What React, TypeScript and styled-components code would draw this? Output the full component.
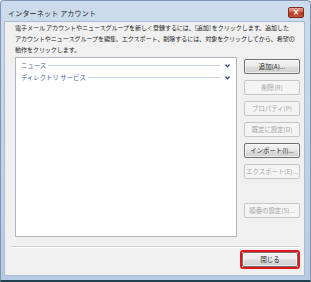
import React from "react";
import styled, { createGlobalStyle } from "styled-components";

const Global = createGlobalStyle`
  html, body { margin: 0; padding: 0; background: #ffffff; }
  body { font-family: "Noto Sans CJK JP", "Noto Sans", sans-serif; }
  * { box-sizing: border-box; }
`;

const Window = styled.div`
  width: 311px;
  height: 282px;
  display: flex;
  flex-direction: column;
  background: linear-gradient(180deg, #cddcec 0%, #c3d5e8 40%, #b6cbe2 100%);
  border: 1px solid #7d95b0;
  border-bottom: 2px solid #24414f;
  border-radius: 4px 4px 0 0;
  overflow: hidden;
`;

const TitleBar = styled.div`
  height: 20px;
  flex: none;
  display: flex;
  align-items: center;
  justify-content: space-between;
  padding: 0 6px 0 7px;
`;

const Title = styled.span`
  font-size: 7px;
  color: #1b1b1b;
  letter-spacing: 0.2px;
  padding-top: 3px;
`;

const CloseButton = styled.div`
  width: 16px;
  height: 11px;
  margin-top: 3px;
  border-radius: 2px;
  border: 1px solid #7a2a22;
  background: linear-gradient(180deg, #e8a99a 0%, #d1604c 45%, #b7321f 55%, #c8563c 100%);
  display: flex;
  align-items: center;
  justify-content: center;
  color: #fff;
  font-family: "DejaVu Sans", sans-serif;
  font-size: 8px;
  font-weight: bold;
  line-height: 1;
`;

const Client = styled.div`
  flex: 1;
  margin: 0 5px 4px 3px;
  background: #f0f0f0;
  border: 1px solid #a8bcd3;
  display: flex;
  flex-direction: column;
  padding: 0 4px 0 6px;
`;

const Description = styled.p`
  margin: 0;
  padding: 0 0 0 4px;
  font-size: 6.1px;
  line-height: 11px;
  color: #222;
  letter-spacing: -0.12px;
  white-space: nowrap;
`;

const MainRow = styled.div`
  display: flex;
  gap: 7px;
  margin-top: 2px;
  padding-left: 4px;
`;

const ListBox = styled.div`
  width: 222px;
  height: 180px;
  background: #fff;
  border: 1px solid #aeb5bd;
  padding: 2px 6px 0 5px;
  display: flex;
  flex-direction: column;
  gap: 1px;
`;

const GroupRow = styled.div`
  height: 11px;
  display: flex;
  align-items: center;
  gap: 2px;
`;

const GroupLabel = styled.span`
  font-size: 6.4px;
  color: #4a64a8;
  white-space: nowrap;
`;

const GroupLine = styled.div`
  flex: 1;
  height: 1px;
  background: #c6d3e9;
  margin-right: 3px;
`;

const Chevron = styled.svg`
  width: 5px;
  height: 4px;
  flex: none;
`;

const ButtonColumn = styled.div`
  display: flex;
  flex-direction: column;
  gap: 6px;
  padding-top: 2px;
`;

const Button = styled.div<{ $disabled?: boolean; $spaced?: boolean }>`
  width: 56px;
  height: 15px;
  border-radius: 2px;
  display: flex;
  align-items: center;
  justify-content: center;
  font-size: 6.4px;
  white-space: nowrap;
  margin-top: ${(p) => (p.$spaced ? "18px" : "0")};
  color: ${(p) => (p.$disabled ? "#a4a4a4" : "#1e1e1e")};
  border: 1px solid ${(p) => (p.$disabled ? "#c2c6ca" : "#707070")};
  background: ${(p) =>
    p.$disabled
      ? "#f4f4f4"
      : "linear-gradient(180deg, #f2f2f2 0%, #ebebeb 48%, #dddddd 52%, #cfcfcf 100%)"};
  box-shadow: ${(p) => (p.$disabled ? "none" : "inset 0 0 0 1px rgba(255,255,255,0.6)")};
`;

const Separator = styled.div`
  height: 2px;
  margin-top: 9px;
  border-top: 1px solid #d0d0d0;
  border-bottom: 1px solid #ffffff;
`;

const Footer = styled.div`
  display: flex;
  justify-content: flex-end;
  padding: 2px 0 0 0;
`;

const Highlight = styled.div`
  border: 2px solid #e2161a;
  border-radius: 3px;
  padding: 0;
`;

const items = ["ニュース", "ディレクトリ サービス"];

const sideButtons: { label: string; disabled?: boolean; spaced?: boolean }[] = [
  { label: "追加(A)..." },
  { label: "削除(R)", disabled: true },
  { label: "プロパティ(P)", disabled: true },
  { label: "既定に設定(D)", disabled: true },
  { label: "インポート(I)..." },
  { label: "エクスポート(E)...", disabled: true },
  { label: "順番の設定(S)...", disabled: true, spaced: true },
];

export default function App() {
  return (
    <>
      <Global />
      <Window>
        <TitleBar>
          <Title>インターネット アカウント</Title>
          <CloseButton>×</CloseButton>
        </TitleBar>
        <Client>
          <Description>
            電子メール アカウントやニュースグループを新しく登録するには、[追加] をクリックします。追加した
            <br />
            アカウントやニュースグループを編集、エクスポート、削除するには、対象をクリックしてから、希望の
            <br />
            動作をクリックします。
          </Description>
          <MainRow>
            <ListBox>
              {items.map((t) => (
                <GroupRow key={t}>
                  <GroupLabel>{t}</GroupLabel>
                  <GroupLine />
                  <Chevron viewBox="0 0 5 4">
                    <path d="M0.5 0.5 L2.5 2.8 L4.5 0.5" stroke="#2b3f86" strokeWidth="1.2" fill="none" />
                  </Chevron>
                </GroupRow>
              ))}
            </ListBox>
            <ButtonColumn>
              {sideButtons.map((b) => (
                <Button key={b.label} $disabled={b.disabled} $spaced={b.spaced}>
                  {b.label}
                </Button>
              ))}
            </ButtonColumn>
          </MainRow>
          <Separator />
          <Footer>
            <Highlight>
              <Button>閉じる</Button>
            </Highlight>
          </Footer>
        </Client>
      </Window>
    </>
  );
}
